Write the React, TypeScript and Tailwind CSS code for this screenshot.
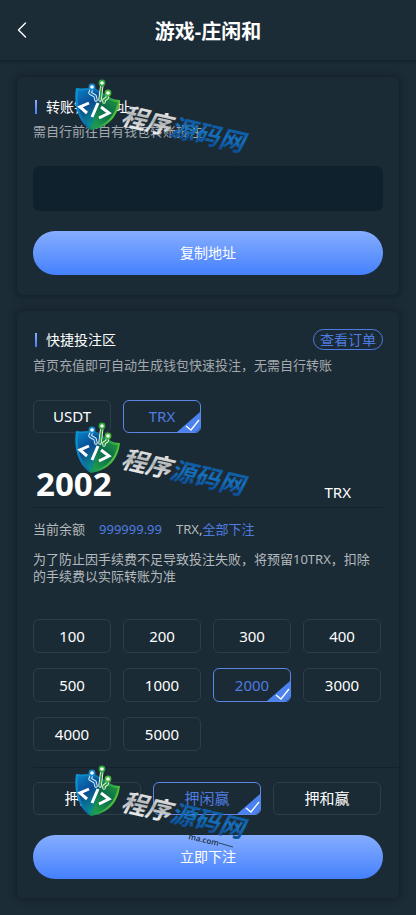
import React, { useState } from 'react';
import { ChevronLeft } from 'lucide-react';

const coins = ['USDT', 'TRX'];
const amounts = ['100', '200', '300', '400', '500', '1000', '2000', '3000', '4000', '5000'];
const sides = ['押庄赢', '押闲赢', '押和赢'];

const cardClass = 'relative rounded-md bg-[#1b2b35] px-4 shadow-[0_0_6px_2px_rgba(12,24,34,0.55)]';
const submitClass =
  'block h-11 w-full rounded-full bg-gradient-to-b from-[#86adff] to-[#4480fc] text-sm text-white cursor-pointer';

// Shield logo with the site name, laid over the cards
const Watermark: React.FC<{ id: string; className: string }> = ({ id, className }) => (
  <svg
    className={`pointer-events-none absolute z-10 h-[90px] w-[190px] ${className}`}
    viewBox="0 0 190 90"
    aria-hidden="true"
  >
    <defs>
      <linearGradient id={`${id}-rim`} x1="0" y1="0.2" x2="1" y2="0.6">
        <stop offset="0" stopColor="#0a93d2" />
        <stop offset="0.45" stopColor="#0b6cae" />
        <stop offset="0.6" stopColor="#12935a" />
        <stop offset="1" stopColor="#5fd02a" />
      </linearGradient>
      <linearGradient id={`${id}-left`} x1="0" y1="0" x2="0.4" y2="1">
        <stop offset="0" stopColor="#0a80c4" />
        <stop offset="0.5" stopColor="#0a4b92" />
        <stop offset="1" stopColor="#0a8f8a" />
      </linearGradient>
      <linearGradient id={`${id}-right`} x1="1" y1="0" x2="0.2" y2="1">
        <stop offset="0" stopColor="#2ba33a" />
        <stop offset="0.5" stopColor="#0b6b4c" />
        <stop offset="1" stopColor="#1f9a4a" />
      </linearGradient>
      <linearGradient id={`${id}-silver`} x1="0" y1="0" x2="0" y2="1">
        <stop offset="0.1" stopColor="#ffffff" />
        <stop offset="0.5" stopColor="#aeb1b3" />
        <stop offset="0.9" stopColor="#f4f4f4" />
      </linearGradient>
      <linearGradient id={`${id}-blue`} x1="0" y1="0" x2="0" y2="1">
        <stop offset="0.1" stopColor="#0a4d94" />
        <stop offset="0.5" stopColor="#1670bc" />
        <stop offset="0.9" stopColor="#0a4890" />
      </linearGradient>
    </defs>
    <path d="M6 12C12 13 18 12 23 11L38 20C42 23 46 24 50 24C48 40 39 51 21 54C10 48 3 31 6 12Z" fill={`url(#${id}-rim)`} />
    <path d="M8 14C13 15 18 14 23 13L31 18L22 52C12 46 6 32 8 14Z" fill={`url(#${id}-left)`} />
    <path d="M31 18L37 22C41 25 44 26 48 26C45 39 37 49 22 52Z" fill={`url(#${id}-right)`} />
    <g fill="none" strokeLinecap="round" strokeLinejoin="round">
      <path d="M22 12L20 17L25 20L26 24M32 8L30 24M38 18L37 22L34 24L34 26" stroke="#ffffff" strokeWidth="3.4" />
      <path d="M22 12L20 17L25 20L26 24" stroke="#1273b8" strokeWidth="1.8" />
      <path d="M32 8L30 24M38 18L37 22L34 24L34 26" stroke="#2e9d38" strokeWidth="1.8" />
      <circle cx="22" cy="11" r="2.6" fill="#ffffff" stroke="#1688cf" strokeWidth="1.6" />
      <circle cx="32" cy="7" r="2.6" fill="#ffffff" stroke="#2da43a" strokeWidth="1.6" />
      <circle cx="38" cy="17" r="2.6" fill="#ffffff" stroke="#45b537" strokeWidth="1.6" />
    </g>
    <path
      d="M19 27L10 31L17 37M28 27L22 41M31 31L39 37L29 42"
      fill="none"
      stroke="#ffffff"
      strokeWidth="3"
    />
    <g transform="rotate(13 50 48)" className="font-['Noto_Sans_CJK_SC',sans-serif] text-[25px] font-bold italic">
      <text x="50" y="48" fill={`url(#${id}-silver)`}>程序</text>
      <text x="100" y="48" fill={`url(#${id}-blue)`}>源码网</text>
    </g>
    <text
      x="118"
      y="77"
      transform="rotate(13 118 77)"
      fill="#1b2b35"
      className="font-['Open_Sans',sans-serif] text-[8px] font-semibold"
    >
      ma.com
    </text>
    <path d="M149 81L163 85" stroke="#1b2b35" strokeWidth="0.8" />
  </svg>
);

interface OptionProps {
  label: string;
  active: boolean;
  onClick: () => void;
}

const Option: React.FC<OptionProps> = ({ label, active, onClick }) => (
  <button
    type="button"
    aria-pressed={active}
    onClick={onClick}
    className={`relative h-full w-full cursor-pointer overflow-hidden rounded-md border text-center text-[15px] ${
      active ? 'border-[#5a86e6] text-[#4f7be0]' : 'border-[#2c3e4b] text-white'
    }`}
  >
    {label}
    {active && (
      <svg className="absolute right-0 bottom-0 h-5 w-[23px]" viewBox="0 0 23 20" aria-hidden="true">
        <path d="M23 0V20H0Z" fill="#4c82f0" />
        <path d="M9 14L14 18L22 8" fill="none" stroke="#ffffff" strokeWidth="1.3" />
      </svg>
    )}
  </button>
);

const SectionTitle: React.FC<{ children: React.ReactNode }> = ({ children }) => (
  <h2 className="flex items-center gap-[9px] pl-[2px] text-sm leading-5 text-white">
    <span className="h-[14px] w-[2px] bg-gradient-to-b from-[#86adff] to-[#4480fc]" />
    {children}
  </h2>
);

const App: React.FC = () => {
  const [coin, setCoin] = useState('TRX');
  const [amount, setAmount] = useState('2000');
  const [side, setSide] = useState('押闲赢');
  const [stake, setStake] = useState('2002');

  return (
    <div className="min-h-screen bg-[#1c2c37] pb-4 font-['Noto_Sans','Noto_Sans_CJK_SC',sans-serif] text-[13px] text-[#a3a9ae]">
      <header className="relative flex h-[61px] items-center justify-center border-b border-[#14222c] shadow-[0_1px_3px_rgba(12,24,34,0.5)]">
        <button type="button" aria-label="返回" className="absolute left-2 flex size-7 items-center justify-center text-white">
          <ChevronLeft size={30} strokeWidth={1.2} />
        </button>
        <h1 className="pt-1 text-[20px] font-bold text-white">游戏-庄闲和</h1>
      </header>

      <main className="flex flex-col gap-4 px-[17px] pt-4">
        <section className={`${cardClass} pt-5 pb-5`}>
          <Watermark id="wm1" className="-top-px left-[53px]" />
          <SectionTitle>转账钱包地址</SectionTitle>
          <p className="mt-1 leading-5">需自行前往自有钱包转账投注</p>
          <input
            readOnly
            aria-label="转账钱包地址"
            className="mt-[25px] block h-[45px] w-full rounded-md bg-[#10212e] px-3 text-white outline-none"
          />
          <button type="button" className={`${submitClass} mt-5`}>复制地址</button>
        </section>

        <section className={`${cardClass} pt-[18px] pb-[19px]`}>
          <Watermark id="wm2" className="top-[108px] left-[53px]" />
          <Watermark id="wm3" className="top-[451px] left-[53px]" />

          <div className="flex items-center justify-between">
            <SectionTitle>快捷投注区</SectionTitle>
            <a href="#orders" className="flex h-[21px] items-center rounded-full border border-[#4f7be0] px-[6px] text-sm text-[#4f7be0]">
              查看订单
            </a>
          </div>
          <p className="mt-[5px] leading-5">首页充值即可自动生成钱包快速投注，无需自行转账</p>

          <div className="mt-[25px] grid h-[33px] grid-cols-4 gap-3 pr-[2px]">
            {coins.map((item) => (
              <Option key={item} label={item} active={coin === item} onClick={() => setCoin(item)} />
            ))}
          </div>

          <div className="mt-8 flex items-center border-b border-[#14222c] pb-1 text-white">
            <input
              aria-label="投注金额"
              value={stake}
              onChange={(e) => setStake(e.target.value)}
              className="h-[38px] min-w-0 flex-1 bg-transparent pl-[3px] text-[33px] font-bold outline-none"
            />
            <span className="pt-4 pr-8 text-[15px] leading-5">TRX</span>
          </div>

          <p className="mt-[11px] flex leading-5 text-[#b3b9bd]">
            <span>当前余额</span>
            <span className="mx-[14px] text-[#4f7be0]">999999.99</span>
            <span>TRX,</span>
            <button type="button" className="cursor-pointer text-[#4f7be0]">全部下注</button>
          </p>
          <p className="mt-3 pr-2 leading-[17px] text-[#b3b9bd]">
            为了防止因手续费不足导致投注失败，将预留10TRX，扣除的手续费以实际转账为准
          </p>

          <div className="mt-[34px] grid auto-rows-[34px] grid-cols-4 gap-x-3 gap-y-[15px] pr-[2px]">
            {amounts.map((item) => (
              <Option key={item} label={item} active={amount === item} onClick={() => setAmount(item)} />
            ))}
          </div>

          <div className="mt-4 -mr-4 border-t border-[#14222c]" />

          <div className="mt-[14px] grid h-[33px] grid-cols-3 gap-3 pr-[2px]">
            {sides.map((item) => (
              <Option key={item} label={item} active={side === item} onClick={() => setSide(item)} />
            ))}
          </div>
          <button type="button" className={`${submitClass} mt-5`}>立即下注</button>
        </section>
      </main>
    </div>
  );
};

export default App;
